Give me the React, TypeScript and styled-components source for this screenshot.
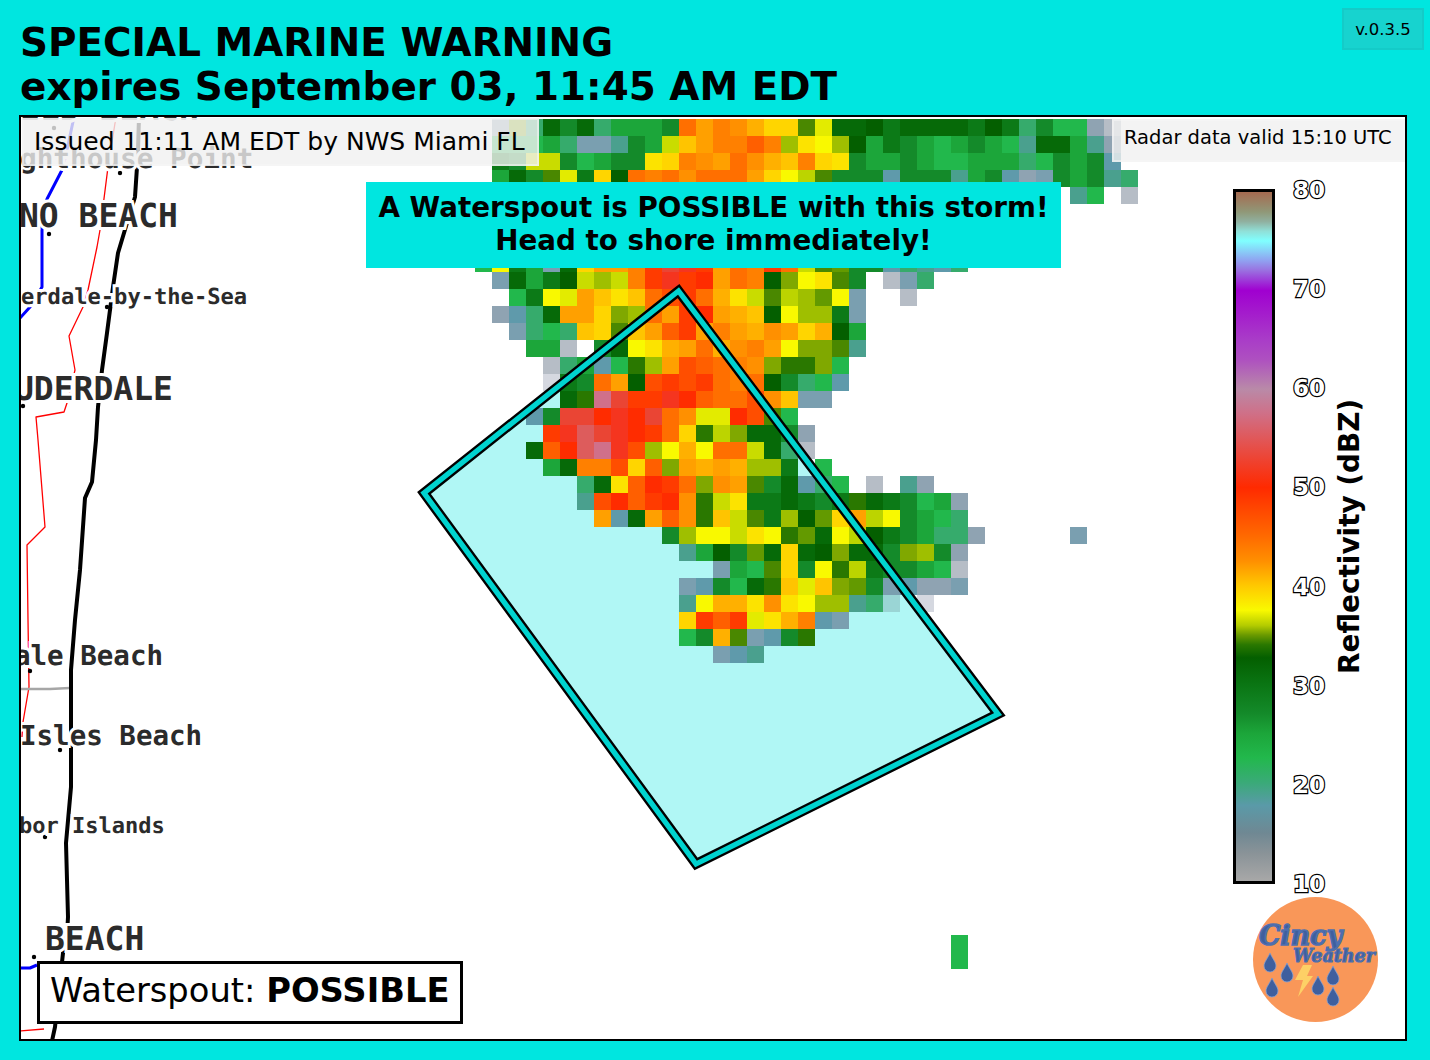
import styled, { createGlobalStyle } from "styled-components";

const GlobalStyle = createGlobalStyle`
  html, body {
    margin: 0;
    padding: 0;
    background: #00e6e0;
  }
`;

const sans = `"DejaVu Sans", "Liberation Sans", sans-serif`;
const mono = `"DejaVu Sans Mono", "Liberation Mono", monospace`;

const Page = styled.div`
  position: relative;
  width: 1430px;
  height: 1060px;
  overflow: hidden;
  background: #00e6e0;
  font-family: ${sans};
  color: #000;
  padding: 21px 0 0 19px;
  box-sizing: border-box;
`;

const Title = styled.h1`
  margin: 0 0 6px 1px;
  font-size: 38.9px;
  line-height: 44px;
  font-weight: 700;
`;

const Version = styled.div`
  position: absolute;
  top: 8px;
  left: 1342px;
  width: 82px;
  height: 42px;
  box-sizing: border-box;
  display: flex;
  align-items: center;
  justify-content: center;
  background: #17d3cf;
  border: 2px solid #14cbc8;
  font-size: 16.5px;
`;

const MapFrame = styled.div`
  position: relative;
  width: 1388px;
  height: 926px;
  box-sizing: border-box;
  border: 2px solid #000;
  background: #fff;
  overflow: hidden;
`;

const MapDrawing = styled.svg`
  position: absolute;
  left: 0;
  top: 0;
  display: block;
`;

const City = styled.span<{ $x: number; $base: number; $size: number }>`
  position: absolute;
  left: ${(p) => p.$x - 21}px;
  top: ${(p) => p.$base - 117}px;
  transform: translateY(-100%);
  font-family: ${mono};
  font-weight: 700;
  font-size: ${(p) => p.$size}px;
  line-height: 1;
  white-space: pre;
  color: #2b2b2b;
  text-rendering: geometricPrecision;
  -webkit-text-stroke: 6px #fff;
  paint-order: stroke fill;
`;

const Overlay = styled.div`
  position: absolute;
  inset: 0;
  display: flex;
  flex-direction: column;
`;

const TopBar = styled.div`
  height: 49px;
  flex: none;
  display: flex;
  justify-content: space-between;
  align-items: flex-start;
`;

const InfoBox = styled.div`
  background: rgba(240, 240, 240, 0.8);
  border: 2px solid rgba(248, 248, 248, 0.5);
  box-sizing: border-box;
  white-space: nowrap;
  color: #000;
`;

const IssuedBox = styled(InfoBox)`
  margin: 1px 0 0 1px;
  width: 517px;
  height: 48px;
  padding: 7px 0 0 10px;
  font-size: 25px;
  line-height: 30px;
`;

const RadarTimeBox = styled(InfoBox)`
  margin-top: 2px;
  width: 293px;
  height: 43px;
  padding: 5px 0 0 10px;
  font-size: 19.5px;
  line-height: 24px;
`;

const Body = styled.div`
  flex: 1;
  display: flex;
  justify-content: space-between;
`;

const LeftColumn = styled.div`
  display: flex;
  flex-direction: column;
  justify-content: space-between;
  padding: 16px 0 15px;
`;

const Banner = styled.div`
  margin-left: 345px;
  width: 695px;
  height: 86px;
  padding-top: 9px;
  box-sizing: border-box;
  background: #00e6e0;
  text-align: center;
  font-size: 27.75px;
  line-height: 33px;
  font-weight: 700;
  white-space: nowrap;
`;

const OddsBox = styled.div`
  margin-left: 16px;
  width: 426px;
  height: 63px;
  box-sizing: border-box;
  border: 3px solid #000;
  background: #fff;
  padding-left: 10px;
  font-size: 33.75px;
  line-height: 54px;
  white-space: nowrap;

  b {
    font-weight: 700;
  }
`;

const RightColumn = styled.div`
  width: 172px;
  padding-top: 23px;
  box-sizing: border-box;
  display: flex;
  flex-direction: column;
  gap: 13px;
`;

const Legend = styled.div`
  height: 695px;
  display: flex;
  align-items: stretch;
`;

const ColorBar = styled.div`
  width: 42px;
  box-sizing: border-box;
  border: 3px solid #000;
  background: linear-gradient(
    to top,
    #a8a8a8 0%,
    #8a9398 4%,
    #6f8893 7%,
    #5a9aa8 11%,
    #3aaa78 14.3%,
    #22b84c 17.9%,
    #1ca63a 21.4%,
    #148a2a 24.3%,
    #0a7513 28.6%,
    #045f00 32.4%,
    #2a7800 34.3%,
    #6a9a00 35.7%,
    #b4cc00 37.1%,
    #f9f900 39.3%,
    #ffc800 42.9%,
    #ff9000 46.4%,
    #ff6a00 50%,
    #ff4a00 53.6%,
    #ff2a00 57.1%,
    #f0402c 60.7%,
    #e0585a 64.3%,
    #cf7088 67.9%,
    #b98aa8 71.4%,
    #ae50c0 75.7%,
    #a93cc8 78.6%,
    #a000d0 85.7%,
    #9a70e0 88.6%,
    #90a0f0 90%,
    #80ffff 92.9%,
    #90e0d8 94.3%,
    #90b0a0 95.7%,
    #909878 97.1%,
    #a56a50 100%
  );
`;

const Ticks = styled.div`
  margin: -11px 0 -12px 18px;
  display: flex;
  flex-direction: column;
  justify-content: space-between;
`;

const Tick = styled.span`
  font-size: 23px;
  font-weight: 700;
  line-height: 24px;
  height: 24px;
  color: #fff;
  -webkit-text-stroke: 2.4px #000;
  paint-order: stroke fill;
`;

const LegendTitle = styled.div`
  margin-left: 9px;
  writing-mode: vertical-rl;
  transform: rotate(180deg);
  text-align: center;
  font-size: 27.9px;
  line-height: 32px;
  font-weight: 700;
  white-space: nowrap;
`;

const Logo = styled.svg`
  margin-left: 20px;
  display: block;
`;

const palette: Record<string, string> = {
  a: "#b6bdc6",
  b: "#8fa3b2",
  c: "#7a9fb0",
  d: "#5f9aab",
  e: "#4aa08e",
  f: "#36ab6c",
  g: "#22b84c",
  h: "#1ca63a",
  i: "#148a2a",
  j: "#0c7a17",
  k: "#066a08",
  l: "#045f00",
  m: "#2a7800",
  n: "#4a8800",
  o: "#639a00",
  p: "#80a800",
  q: "#9fbf00",
  r: "#bcd400",
  s: "#c9dc00",
  t: "#e3eb00",
  u: "#f9f900",
  v: "#fce300",
  w: "#ffd500",
  x: "#ffc400",
  y: "#ffb000",
  z: "#ffa000",
  A: "#ff9000",
  B: "#ff8000",
  C: "#ff6f00",
  D: "#ff5f00",
  E: "#ff4e00",
  F: "#ff3b00",
  G: "#ff2c00",
  H: "#f5351f",
  I: "#ea4534",
  J: "#dd5c5c",
  K: "#d0708a",
  M: "#9ad5d5",
  N: "#d5d8e0",
};

// [row, first column, cells] on the 17px radar grid
const radarRows: [number, number, string][] = [
  [0, 0, "bpfkikfhhhiCzBAywwntkkljkkkkjljfiggba"],
  [1, 0, "ggghfcceihsxzBBDBqvuqlhjihghihgekkheb"],
  [2, 0, "jissighiivwBAzCAyxBwvihhihgghhhfgihid"],
  [3, 0, "hkintjwlCBCACCCzwurniiidiiiehidbcihief"],
  [4, 34, "eg.a"],
  [8, -1, "gujhckwzzBFIHFzCBFCsnoiidfedf"],
  [9, 0, "ckhjlsqsBFHFGzCBlpuvni.acf"],
  [10, 1, "gjutzxvxCEFCyvsnrqouc..a"],
  [11, 0, "bdfkzzwpqCzFGzyxluqqjc"],
  [12, 1, "cfgfxwnxzDFzBzyAzwylh"],
  [13, 2, "hha.ikuvyzCyABzuppne"],
  [14, 3, "afhdgmqzEDCBApmmpg"],
  [15, 3, "NjiCzlEFEFCBClifgd"],
  [16, 4, "kmKIFFHGDCCEAxcc"],
  [17, 2, "diIIGHGICAttGEng"],
  [18, 3, "FHJIHGFCwmrpkkib"],
  [19, 2, "kDGJKHEquyuCCskfa"],
  [20, 3, "hkBBEwDpzyzyqqj.g"],
  [21, 5, "fkvDGFCpAznikdfg.a.eb"],
  [22, 5, "eEGDFGAmsvjjkjijmkjighb"],
  [23, 6, "zdkzDAmxsnjqlowzruihgf"],
  [24, 10, "iquusvumokurljihffb.....c"],
  [25, 11, "ehliokwklpkkipqib"],
  [26, 13, "chgnwiumrjiihga"],
  [27, 11, "cdigkmxtxpoicdbbc"],
  [28, 11, "euyyvAvuqqefM.N"],
  [29, 11, "wFDFtvyBdc"],
  [30, 11, "giyncdim"],
  [31, 13, "cde"],
  [48, 27, "g"],
  [49, 27, "g"],
];

const warningShape = "678.5,291 424,493 696,864 998,714";

const road =
  "139,117 138,150 137,167 135,197 127,223 118,253 113,287 107,333 102,370 98,407 96,440 92,482 85,498 80,570 75,620 71,670 71,787 66,843 68,917 67,935 63,953 55,1027 52,1041";
const blueNorth = "74,117 67,150 62,170 47,199 42,227 42,287 30,307 20,318";
const blueSouth = "20,968 30,968 37,965";
const redLine =
  "116,117 108,167 100,230 97,247 88,290 83,307 69,336 75,370 67,403 64,412 36,417 38,440 45,527 27,545 28,620 29,687 23,722 22,737";
const redSouth = "20,1031 44,1029";
const grayLine = "20,689 50,689 70,688";

const towns: [number, number][] = [
  [54, 128],
  [120, 173],
  [49, 234],
  [107, 307],
  [23, 406],
  [30, 671],
  [60, 750],
  [45, 837],
  [34, 957],
];

const cities: { name: string; x: number; base: number; size: number }[] = [
  { name: "ELD BEACH", x: 20, base: 125, size: 33 },
  { name: "ghthouse Point", x: 20, base: 173, size: 27.7 },
  { name: "NO BEACH", x: 19, base: 232, size: 33 },
  { name: "erdale-by-the-Sea", x: 21, base: 308, size: 22.1 },
  { name: "UDERDALE", x: 14, base: 405, size: 33 },
  { name: "ale Beach", x: 14, base: 670, size: 27.5 },
  { name: "Isles Beach", x: 20, base: 750, size: 27.5 },
  { name: "bor Islands", x: 19, base: 838, size: 22 },
  { name: "BEACH", x: 45, base: 955, size: 33 },
];

const drops: [number, number][] = [
  [17, 66],
  [34, 76],
  [19, 91],
  [65, 89],
  [80, 79],
  [80, 100],
];

const ticks = [80, 70, 60, 50, 40, 30, 20, 10];

function App() {
  return (
    <Page>
      <GlobalStyle />
      <Title>
        SPECIAL MARINE WARNING
        <br />
        expires September 03, 11:45 AM EDT
      </Title>
      <Version>v.0.3.5</Version>
      <MapFrame>
        <MapDrawing width={1384} height={922} viewBox="21 117 1384 922">
          <g fill="none" strokeLinejoin="round">
            <polyline points={redLine} stroke="#ff0000" strokeWidth={1.3} />
            <polyline points={redSouth} stroke="#ff0000" strokeWidth={1.3} />
            <polyline points={grayLine} stroke="#a6a6a6" strokeWidth={2.5} />
            <polyline points={blueNorth} stroke="#0000ff" strokeWidth={3} />
            <polyline points={blueSouth} stroke="#0000ff" strokeWidth={3} />
            <polyline points={road} stroke="#000" strokeWidth={4} />
          </g>
          {towns.map(([x, y]) => (
            <circle key={x} cx={x} cy={y} r={2.2} fill="#000" />
          ))}
          <polygon points={warningShape} fill="#b0f7f5" />
          <g shapeRendering="crispEdges">
            {radarRows.map(([row, first, cells]) =>
              cells.split("").map((cell, i) =>
                cell === "." ? null : (
                  <rect
                    key={`${row}-${i}`}
                    x={492 + (first + i) * 17}
                    y={119 + row * 17}
                    width={17}
                    height={17}
                    fill={palette[cell]}
                  />
                )
              )
            )}
          </g>
          <polygon
            points={warningShape}
            fill="none"
            stroke="#000"
            strokeWidth={10}
            strokeLinejoin="miter"
          />
          <polygon
            points={warningShape}
            fill="none"
            stroke="#00d3cf"
            strokeWidth={5.3}
            strokeLinejoin="miter"
          />
        </MapDrawing>
        {cities.map((c) => (
          <City key={c.name} $x={c.x} $base={c.base} $size={c.size}>
            {c.name}
          </City>
        ))}
        <Overlay>
          <TopBar>
            <IssuedBox>Issued 11:11 AM EDT by NWS Miami FL</IssuedBox>
            <RadarTimeBox>Radar data valid 15:10 UTC</RadarTimeBox>
          </TopBar>
          <Body>
            <LeftColumn>
              <Banner>
                A Waterspout is POSSIBLE with this storm!
                <br />
                Head to shore immediately!
              </Banner>
              <OddsBox>
                Waterspout: <b>POSSIBLE</b>
              </OddsBox>
            </LeftColumn>
            <RightColumn>
              <Legend>
                <ColorBar />
                <Ticks>
                  {ticks.map((t) => (
                    <Tick key={t}>{t}</Tick>
                  ))}
                </Ticks>
                <LegendTitle>Reflectivity (dBZ)</LegendTitle>
              </Legend>
              <Logo width={125} height={125} viewBox="0 0 125 125">
                <circle cx={62.5} cy={62.5} r={62.5} fill="#f99759" />
                <text
                  x={6}
                  y={48}
                  fontFamily='"DejaVu Serif", serif'
                  fontWeight={700}
                  fontStyle="italic"
                  fontSize={27}
                  fill="#3f5f9e"
                  stroke="#4f6fae"
                  strokeWidth={1.7}
                  textLength={83}
                  lengthAdjust="spacingAndGlyphs"
                >
                  Cincy
                </text>
                <text
                  x={40}
                  y={65}
                  fontFamily='"DejaVu Serif", serif'
                  fontWeight={700}
                  fontStyle="italic"
                  fontSize={18}
                  fill="#3f5f9e"
                  stroke="#4f6fae"
                  strokeWidth={1.1}
                  textLength={82}
                  lengthAdjust="spacingAndGlyphs"
                >
                  Weather
                </text>
                <path d="M50 68 L59 68 L54 79 L60 79 L45 100 L50 83 L42 83 Z" fill="#fdd066" />
                {drops.map(([x, y]) => (
                  <path
                    key={`${x}-${y}`}
                    d={`M${x} ${y - 10} C${x + 2} ${y - 5} ${x + 6} ${y - 1} ${x + 6} ${y + 3} A6 6 0 1 1 ${x - 6} ${y + 3} C${x - 6} ${y - 1} ${x - 2} ${y - 5} ${x} ${y - 10} Z`}
                    fill="#3f5f9e"
                    stroke="#7f9fd8"
                    strokeWidth={0.8}
                  />
                ))}
              </Logo>
            </RightColumn>
          </Body>
        </Overlay>
      </MapFrame>
    </Page>
  );
}

export default App;
